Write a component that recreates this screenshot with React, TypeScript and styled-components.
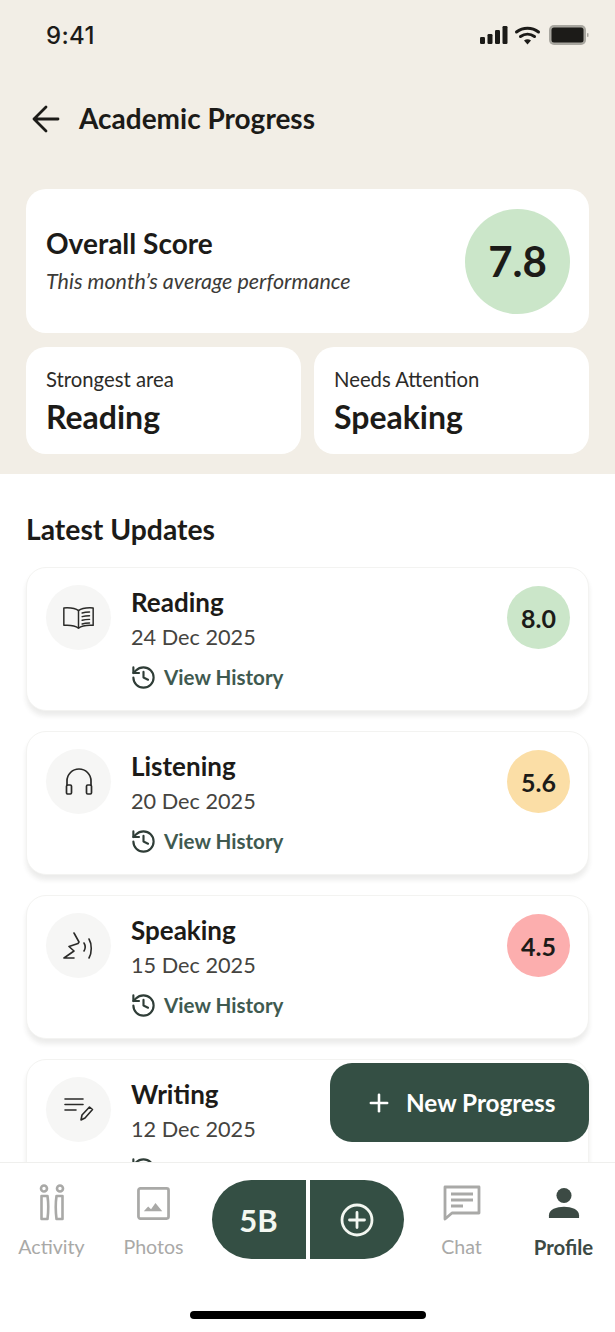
import React from "react";
import styled, { createGlobalStyle } from "styled-components";
import { History, Plus } from "lucide-react";

const GlobalStyle = createGlobalStyle`
  html, body {
    margin: 0;
    padding: 0;
    background: #ffffff;
  }
  * {
    box-sizing: border-box;
  }
`;

const Phone = styled.div`
  width: 615px;
  height: 1332px;
  position: relative;
  overflow: hidden;
  display: flex;
  flex-direction: column;
  background: #ffffff;
  color: #1c1b18;
  font-family: "Lato", "Noto Sans", sans-serif;
`;

const TopArea = styled.div`
  height: 474px;
  flex-shrink: 0;
  background: #f2eee6;
  padding: 0 26px;
`;

const StatusBar = styled.div`
  height: 70px;
  display: flex;
  align-items: center;
  justify-content: space-between;
  padding: 0 0 0 20px;
`;

const Clock = styled.span`
  font-family: "Inter", sans-serif;
  font-size: 24px;
  font-weight: 500;
  letter-spacing: 0.3px;
`;

const HeaderRow = styled.div`
  height: 38px;
  margin-top: 30px;
  display: flex;
  align-items: center;
  gap: 19px;
  padding-left: 6px;
`;

const PageTitle = styled.h1`
  margin: 0;
  padding-bottom: 2px;
  font-size: 28px;
  font-weight: 700;
  line-height: 36px;
`;

const OverallCard = styled.div`
  margin-top: 51px;
  height: 144px;
  background: #ffffff;
  border-radius: 20px;
  padding: 20px 19px 20px 20px;
  display: flex;
  align-items: center;
  justify-content: space-between;
`;

const OverallTitle = styled.div`
  font-size: 28px;
  font-weight: 700;
  line-height: 30px;
`;

const OverallSub = styled.div`
  margin-top: 10px;
  font-size: 21.5px;
  font-style: italic;
  line-height: 26px;
  color: #3c3b38;
`;

const ScoreBig = styled.div`
  width: 105px;
  height: 105px;
  border-radius: 50%;
  background: #cbe6c9;
  display: flex;
  align-items: center;
  justify-content: center;
  font-size: 42px;
  font-weight: 700;
`;

const SmallGrid = styled.div`
  margin-top: 14px;
  display: grid;
  grid-template-columns: 275px 275px;
  gap: 13px;
`;

const SmallCard = styled.div`
  height: 107px;
  background: #ffffff;
  border-radius: 20px;
  padding: 19px 20px 0;
`;

const SmallLabel = styled.div`
  font-size: 20.3px;
  line-height: 26px;
  color: #2c2b28;
`;

const SmallValue = styled.div`
  margin-top: 6px;
  font-size: 32px;
  font-weight: 700;
  line-height: 38px;
`;

const ListArea = styled.div`
  flex: 1;
  min-height: 0;
  overflow: hidden;
  padding: 37px 26px 0;
`;

const SectionTitle = styled.h2`
  margin: 0 0 20px;
  font-size: 28.3px;
  font-weight: 700;
  line-height: 36px;
`;

const UpdateList = styled.div`
  display: flex;
  flex-direction: column;
  gap: 20px;
`;

const UpdateCard = styled.div`
  height: 144px;
  flex-shrink: 0;
  background: #ffffff;
  border: 1px solid #f3f3f1;
  border-radius: 20px;
  box-shadow: 0 5px 5px rgba(40, 40, 30, 0.09);
  padding: 17px 18px 0 19px;
  display: flex;
  align-items: flex-start;
`;

const IconCircle = styled.div`
  width: 65px;
  height: 65px;
  flex-shrink: 0;
  border-radius: 50%;
  background: #f6f6f5;
  display: flex;
  align-items: center;
  justify-content: center;
`;

const UpdateBody = styled.div`
  flex: 1;
  margin-left: 20px;
`;

const UpdateName = styled.div`
  font-size: 26px;
  font-weight: 700;
  line-height: 34px;
`;

const UpdateDate = styled.div`
  font-size: 21.7px;
  line-height: 30px;
  margin-top: 3px;
  color: #45443f;
`;

const HistoryLink = styled.div`
  margin: 10px 0 0 -1px;
  height: 30px;
  display: flex;
  align-items: center;
  gap: 7px;
  font-size: 20.6px;
  font-weight: 700;
  color: #3f5a50;
`;

const ScoreBadge = styled.div<{ $bg: string }>`
  width: 63px;
  height: 63px;
  flex-shrink: 0;
  margin-top: 1px;
  border-radius: 50%;
  background: ${(p) => p.$bg};
  display: flex;
  align-items: center;
  justify-content: center;
  font-size: 25px;
  font-weight: 700;
`;

const Fab = styled.button`
  position: absolute;
  left: 330px;
  top: 1063px;
  width: 259px;
  height: 79px;
  border: 0;
  border-radius: 22px;
  background: #344f44;
  color: #ffffff;
  display: flex;
  align-items: center;
  gap: 13px;
  padding: 0 0 0 35px;
  font-family: inherit;
  font-size: 24.3px;
  font-weight: 700;
`;

const BottomNav = styled.nav`
  height: 170px;
  flex-shrink: 0;
  background: #ffffff;
  border-top: 1px solid #efefed;
  position: relative;
  padding-top: 17px;
  display: grid;
  grid-template-columns: 103px 101px 207px 101px 103px;
`;

const NavItem = styled.div<{ $active?: boolean }>`
  display: flex;
  flex-direction: column;
  align-items: center;
  height: 82px;
  font-size: ${(p) => (p.$active ? "20.4px" : "19.6px")};
  font-weight: ${(p) => (p.$active ? 700 : 400)};
  color: ${(p) => (p.$active ? "#3c4a44" : "#a9a9a7")};
`;

const NavIconWrap = styled.div`
  height: 46px;
  display: flex;
  align-items: center;
  justify-content: center;
`;

const NavLabel = styled.span`
  margin-top: 8px;
  line-height: 26px;
`;

const CenterPill = styled.div`
  display: flex;
  justify-content: center;
  gap: 4px;
`;

const PillPart = styled.div<{ $side: "left" | "right" }>`
  width: 94px;
  height: 79px;
  background: #344f44;
  color: #f3f7f1;
  display: flex;
  align-items: center;
  justify-content: center;
  font-size: 31px;
  font-weight: 700;
  border-radius: ${(p) =>
    p.$side === "left" ? "40px 0 0 40px" : "0 40px 40px 0"};
`;

const HomeBar = styled.div`
  position: absolute;
  left: 190px;
  bottom: 13px;
  width: 236px;
  height: 8px;
  border-radius: 4px;
  background: #000000;
`;

const StatusIcons = () => (
  <svg width="110" height="22" viewBox="0 0 110 22" fill="#1c1b18">
    <rect x="1" y="13" width="5" height="7" rx="1.2" />
    <rect x="8.500" y="10" width="5" height="10" rx="1.2" />
    <rect x="16" y="6" width="5" height="14" rx="1.2" />
    <rect x="23.500" y="2" width="5" height="18" rx="1.2" />
    <path
      d="M37.500 8a18 18 0 0 1 22 0M41.500 12.500a12 12 0 0 1 14 0"
      fill="none"
      stroke="#1c1b18"
      strokeWidth="3"
      strokeLinecap="round"
    />
    <path d="M45 16.500a6 6 0 0 1 7 0L48.500 20.500z" />
    <rect x="70" y="1" width="37" height="20" rx="5" fill="#a8a69f" />
    <rect x="72.500" y="3.500" width="32" height="15" rx="2.500" />
    <rect x="108" y="9" width="1.500" height="4" rx="0.7" fill="#a8a69f" />
  </svg>
);

const BackArrow = () => (
  <svg width="28" height="28" viewBox="0 0 28 28" fill="none" stroke="#1c1b18" strokeWidth="2.8" strokeLinecap="round" strokeLinejoin="round">
    <path d="M2 14h24M14 2L2 14l12 12" />
  </svg>
);

const BookIcon = () => (
  <svg width="33" height="24" viewBox="0 0 36 26" fill="none" stroke="#2a2a28" strokeWidth="1.6" strokeLinejoin="round" strokeLinecap="round">
    <path d="M18 5C15 2.500 10 1.500 2 2v19c7-.5 12 0 16 3 4-3 9-3.500 16-3V2C26 1.500 21 2.500 18 5z" />
    <path d="M18 5v19" />
    <path d="M22 7.500c2.500-.8 5-1 8-1M22 11.500c2.500-.8 5-1 8-1M22 15.500c2.500-.8 5-1 8-1M22 19.500c2.500-.8 5-1 8-1" />
  </svg>
);

const HeadphonesIcon = () => (
  <svg width="28" height="28" viewBox="0 0 28 28" fill="none" stroke="#2a2a28" strokeWidth="1.7" strokeLinejoin="round">
    <path d="M2 18v-5a12 12 0 0 1 24 0v5" />
    <rect x="1.500" y="17" width="5" height="9" rx="1.200" />
    <rect x="21.500" y="17" width="5" height="9" rx="1.200" />
  </svg>
);

const SpeakingIcon = () => (
  <svg width="32" height="30" viewBox="0 0 32 30" fill="none" stroke="#2a2a28" strokeWidth="1.6" strokeLinejoin="round" strokeLinecap="round">
    <path d="M11 2l5 9-1 1.500-9 3 5 4.500-10 7h10" />
    <path d="M21 12c1.500 2.500 1.500 5.500 0 8M26 8c3 5 3 14 0 19" />
  </svg>
);

const WritingIcon = () => (
  <svg width="30" height="26" viewBox="0 0 30 26" fill="none" stroke="#2a2a28" strokeWidth="1.6" strokeLinecap="round" strokeLinejoin="round">
    <path d="M1 2h18M1 7.500h18M1 13h11" />
    <path d="M17 23l1-5 7.500-8 3 2.500-7.500 8.500z" />
  </svg>
);

const ActivityIcon = () => (
  <svg width="26" height="38" viewBox="0 0 26 38" fill="none" stroke="#a9a9a7" strokeWidth="2.6">
    <circle cx="5" cy="4.500" r="3" />
    <circle cx="21" cy="4.500" r="3" />
    <path d="M2.500 12h6c1 7 1 15 0 23h-6z" strokeLinejoin="round" />
    <path d="M23.500 12h-6c-1 7-1 15 0 23h6z" strokeLinejoin="round" />
  </svg>
);

const PhotosIcon = () => (
  <svg width="33" height="33" viewBox="0 0 34 34" fill="none">
    <rect x="1.500" y="1.500" width="31" height="31" rx="2" stroke="#a9a9a7" strokeWidth="2.800" />
    <path d="M7 25l4.500-5 3 3 4.500-6.500L26 25z" fill="#a9a9a7" />
  </svg>
);

const ChatIcon = () => (
  <svg width="38" height="36" viewBox="0 0 38 36" fill="none">
    <path d="M2 2h34v26H9l-7 6z" stroke="#a9a9a7" strokeWidth="2.800" strokeLinejoin="round" />
    <path d="M8 9h22M8 15h22M8 21h12" stroke="#a9a9a7" strokeWidth="2.800" />
  </svg>
);

const ProfileIcon = () => (
  <svg width="32" height="32" viewBox="0 0 34 34" fill="#3c4a44">
    <circle cx="17" cy="9" r="8" />
    <path d="M1 33v-3c0-6 8-9 16-9s16 3 16 9v3z" />
  </svg>
);

const CirclePlusIcon = () => (
  <svg width="34" height="34" viewBox="0 0 34 34" fill="none" stroke="#f3f7f1" strokeWidth="2.800" strokeLinecap="round">
    <circle cx="17" cy="17" r="15" />
    <path d="M17 9.500v15M9.500 17h15" />
  </svg>
);

type Update = {
  name: string;
  date: string;
  score?: string;
  color?: string;
  icon: React.ReactNode;
};

// the last card runs under the nav, only the top of its history icon shows
const updates: Update[] = [
  { name: "Reading", date: "24 Dec 2025", score: "8.0", color: "#cbe6c9", icon: <BookIcon /> },
  { name: "Listening", date: "20 Dec 2025", score: "5.6", color: "#fbdea6", icon: <HeadphonesIcon /> },
  { name: "Speaking", date: "15 Dec 2025", score: "4.5", color: "#fcaeae", icon: <SpeakingIcon /> },
  { name: "Writing", date: "12 Dec 2025", icon: <WritingIcon /> },
];

export default function App(): React.JSX.Element {
  return (
    <Phone>
      <GlobalStyle />
      <TopArea>
        <StatusBar>
          <Clock>9:41</Clock>
          <StatusIcons />
        </StatusBar>
        <HeaderRow>
          <BackArrow />
          <PageTitle>Academic Progress</PageTitle>
        </HeaderRow>
        <OverallCard>
          <div>
            <OverallTitle>Overall Score</OverallTitle>
            <OverallSub>This month’s average performance</OverallSub>
          </div>
          <ScoreBig>7.8</ScoreBig>
        </OverallCard>
        <SmallGrid>
          <SmallCard>
            <SmallLabel>Strongest area</SmallLabel>
            <SmallValue>Reading</SmallValue>
          </SmallCard>
          <SmallCard>
            <SmallLabel>Needs Attention</SmallLabel>
            <SmallValue>Speaking</SmallValue>
          </SmallCard>
        </SmallGrid>
      </TopArea>

      <ListArea>
        <SectionTitle>Latest Updates</SectionTitle>
        <UpdateList>
          {updates.map((u) => (
            <UpdateCard key={u.name}>
              <IconCircle>{u.icon}</IconCircle>
              <UpdateBody>
                <UpdateName>{u.name}</UpdateName>
                <UpdateDate>{u.date}</UpdateDate>
                <HistoryLink>
                  <History size={27} strokeWidth={1.9} color="#2f3d37" />
                  {u.score && "View History"}
                </HistoryLink>
              </UpdateBody>
              {u.score && <ScoreBadge $bg={u.color ?? "#cbe6c9"}>{u.score}</ScoreBadge>}
            </UpdateCard>
          ))}
        </UpdateList>
      </ListArea>

      <Fab>
        <Plus size={28} strokeWidth={2.2} />
        New Progress
      </Fab>

      <BottomNav>
        <NavItem>
          <NavIconWrap><ActivityIcon /></NavIconWrap>
          <NavLabel>Activity</NavLabel>
        </NavItem>
        <NavItem>
          <NavIconWrap><PhotosIcon /></NavIconWrap>
          <NavLabel>Photos</NavLabel>
        </NavItem>
        <CenterPill>
          <PillPart $side="left">5B</PillPart>
          <PillPart $side="right"><CirclePlusIcon /></PillPart>
        </CenterPill>
        <NavItem>
          <NavIconWrap><ChatIcon /></NavIconWrap>
          <NavLabel>Chat</NavLabel>
        </NavItem>
        <NavItem $active>
          <NavIconWrap><ProfileIcon /></NavIconWrap>
          <NavLabel>Profile</NavLabel>
        </NavItem>
        <HomeBar />
      </BottomNav>
    </Phone>
  );
}
